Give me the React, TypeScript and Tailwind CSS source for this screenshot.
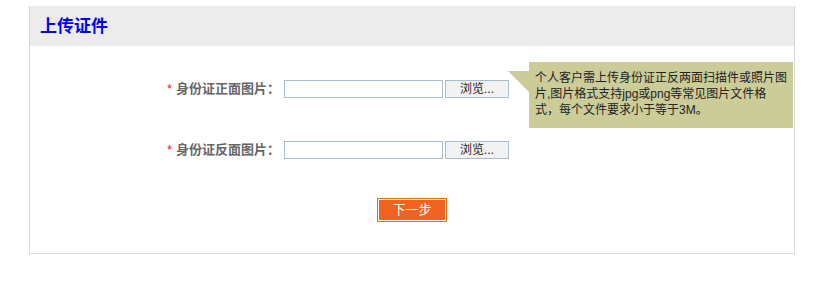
const cn = "font-['Liberation_Sans','Noto_Sans_CJK_SC',sans-serif]";

function UploadRow({ label }: { label: string }) {
  return (
    <div className="flex items-center h-[18px]">
      <div className="w-[250px] text-right text-[13px] font-bold text-[#666] leading-[18px]">
        <span className="text-[#ff0000] font-normal text-[12px] mr-[4px]">*</span>
        {label}：
      </div>
      <div className="ml-[4px] w-[159px] h-[18px] border border-[#a9bccb] bg-white" />
      <button className="ml-[2px] w-[64px] h-[18px] border border-[#a9bccb] bg-[#f2f2f2] text-[12px] leading-[16px] text-[#222]">
        浏览...
      </button>
    </div>
  );
}

export default function App() {
  return (
    <div className={`w-[822px] h-[285px] bg-white ${cn}`}>
      <div className="relative ml-[29px] w-[766px] border-x border-b border-[#dadada]">
        {/* Header */}
        <div className="mt-[6px] h-[40px] bg-[#ececec] pl-[10px] flex items-center">
          <h2 className="text-[17px] font-bold text-[#0000ff] leading-none">上传证件</h2>
        </div>

        {/* Form */}
        <div className="pt-[34px] pb-[31px] flex flex-col">
          <UploadRow label="身份证正面图片" />
          <div className="h-[43px]" />
          <UploadRow label="身份证反面图片" />
          <div className="mt-[39px] flex justify-center">
            <button className="w-[70px] h-[24px] border border-[#e8690f] bg-[#f26322] p-0">
              <span className="block h-full border border-white text-[13px] leading-[20px] text-white">
                下一步
              </span>
            </button>
          </div>
        </div>

        {/* Tip bubble */}
        <div className="absolute left-[499px] top-[56px] w-[264px] h-[66px] bg-[#cccc99] pl-[6px] pr-[4px] pt-[8px] text-[12px] leading-[16px] text-[#222]">
          <svg className="absolute left-[-21px] top-[9px]" width="21" height="21" viewBox="0 0 21 21">
            <polygon points="0,0 21,0 21,21" fill="#cccc99" />
          </svg>
          个人客户需上传身份证正反两面扫描件或照片图片,图片格式支持jpg或png等常见图片文件格式，每个文件要求小于等于3M。
        </div>
      </div>
    </div>
  );
}
